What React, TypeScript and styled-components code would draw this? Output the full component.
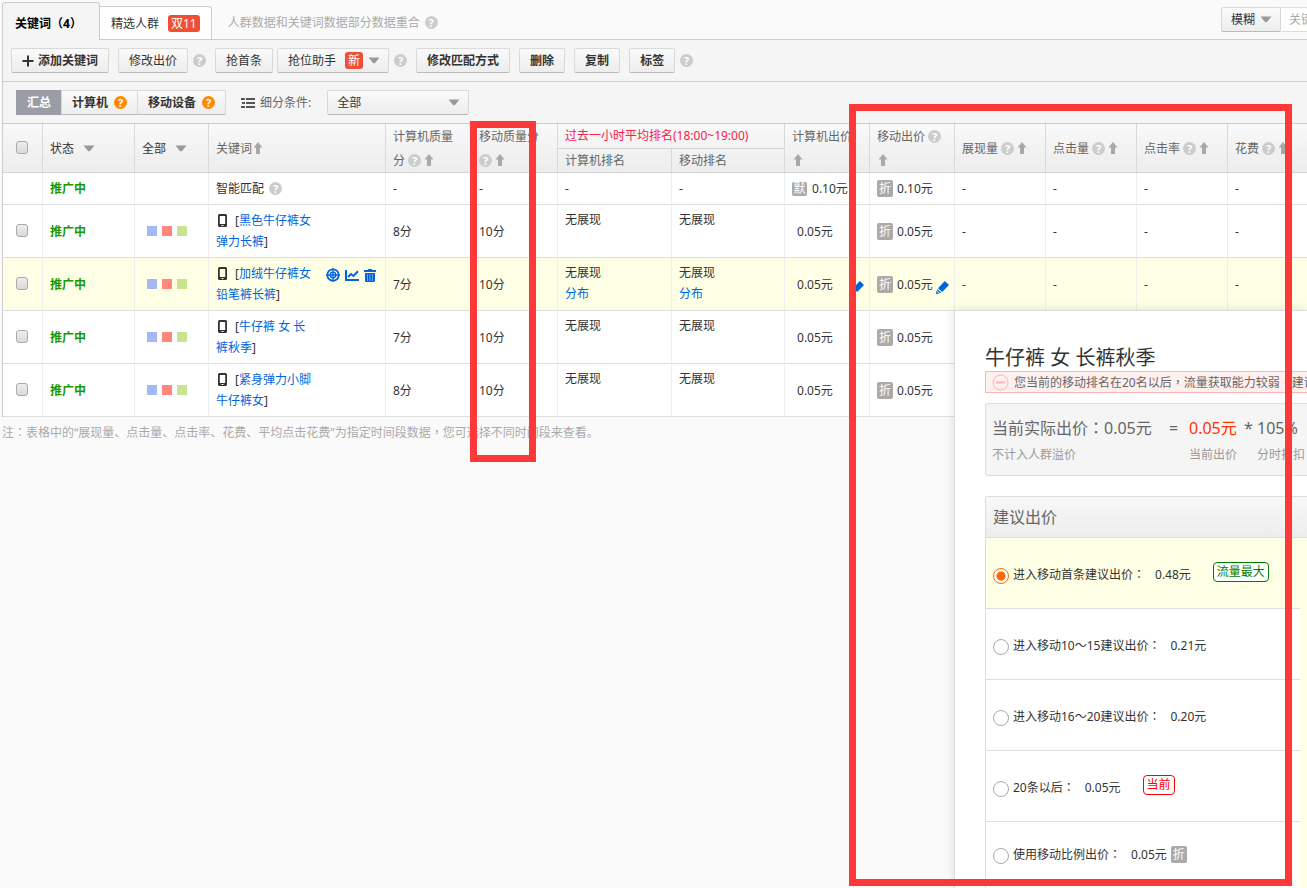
import React from "react";
import styled, { createGlobalStyle, css } from "styled-components";

const GlobalStyle = createGlobalStyle`
  *, *::before, *::after { box-sizing: border-box; }
  body {
    margin: 0;
    background: #fafafa;
    color: #333;
    font: 12px/21px "Noto Sans", "Noto Sans CJK SC", sans-serif;
  }
  button, input, select { font: inherit; color: inherit; margin: 0; }
  a { color: #0065dd; text-decoration: none; }
`;

/* Full-width colons, commas and brackets sit in the middle of their square. */
const Centred = styled.span`
  font-family: "Noto Sans CJK TC", sans-serif;
  line-height: 1;
`;

const centred = (text: string) =>
  text.split(/([：，（）])/).map((part, i) => (i % 2 ? <Centred key={i}>{part}</Centred> : part));

/* ---------- icons ---------- */

const Svg = styled.svg`
  display: block;
  flex: none;
`;

const HelpMark = styled.span<{ $tone?: string }>`
  display: inline-flex;
  flex: none;
  align-items: center;
  justify-content: center;
  width: 13px;
  height: 13px;
  border-radius: 50%;
  background: ${(p) => p.$tone || "#ccc"};
  color: #fff;
  font-size: 11px;
  font-weight: 700;
  line-height: 13px;
`;

const Help = ({ tone }: { tone?: string }) => <HelpMark $tone={tone}>?</HelpMark>;

const SortUp = () => (
  <Svg width="12" height="12" viewBox="0 0 12 12" fill="#a8a8a8">
    <path d="M6 0L10.500 5.500H8V12H4V5.500H1.500Z" />
  </Svg>
);

const Caret = ({ className }: { className?: string }) => (
  <Svg className={className} width="12" height="7" viewBox="0 0 12 7" fill="#999">
    <path d="M0.500 0.500H11.500L6.800 6.300H5.200Z" />
  </Svg>
);

const PlusIcon = () => (
  <Svg width="12" height="12" viewBox="0 0 12 12" fill="#333">
    <path d="M5 0.500H7V5H11.500V7H7V11.500H5V7H0.500V5H5Z" />
  </Svg>
);

const ListIcon = () => (
  <Svg width="14" height="12" viewBox="0 0 14 12" fill="#555">
    <path d="M0 1H4V3H0ZM5 1H14V3H5ZM1 5H4V7H1ZM5 5H14V7H5ZM0 9H4V11H0ZM5 9H14V11H5Z" />
  </Svg>
);

const PhoneIcon = styled(Svg)`
  display: inline-block;
  margin: 0 4px 0 2px;
  vertical-align: -2px;
`;

const Phone = () => (
  <PhoneIcon width="10" height="13" viewBox="0 0 10 13">
    <path
      fill="#333"
      fillRule="evenodd"
      d="M1.500 0H7.500Q9 0 9 1.500V11.500Q9 13 7.500 13H1.500Q0 13 0 11.500V1.500Q0 0 1.500 0ZM1.800 2V10H7.200V2ZM3.500 11V12H5.500V11Z"
    />
  </PhoneIcon>
);

const TargetIcon = () => (
  <Svg width="14" height="14" viewBox="0 0 14 14" fill="none" stroke="#0065dd">
    <circle cx="7" cy="7" r="5.700" strokeWidth="1.800" />
    <circle cx="7" cy="7" r="2.800" strokeWidth="1.300" />
    <path d="M7 0V14M0 7H14" strokeWidth="1.300" />
  </Svg>
);

const ChartIcon = () => (
  <Svg width="14" height="13" viewBox="0 0 14 13" fill="none" stroke="#0065dd" strokeWidth="2">
    <path d="M1 1V11H14" />
    <path d="M3 8L6 5L8.500 7L13 2.300" />
  </Svg>
);

const TrashIcon = () => (
  <Svg width="12" height="13" viewBox="0 0 12 13">
    <path fill="#0065dd" d="M4 0H8V1H12V3H0V1H4ZM1 4H11V12Q11 13 10 13H2Q1 13 1 12Z" />
    <path stroke="#fff" strokeOpacity="0.400" d="M3.500 5V12M6 5V12M8.500 5V12" />
  </Svg>
);

const PencilSvg = styled(Svg)`
  margin: 6px 0 0 auto;
`;

const Pencil = () => (
  <PencilSvg width="13" height="13" viewBox="0 0 13 13" fill="#0065dd">
    <path d="M8.800 0L13 4L6.200 11L2 7.200ZM1.400 8L5.300 11.700L4 12.300L1.300 10ZM0.200 9.800L3.200 12.700L0.200 13Z" />
  </PencilSvg>
);

const MinusCircle = () => (
  <Svg width="17" height="17" viewBox="0 0 17 17" fill="none" stroke="#ffb0b0">
    <circle cx="8.500" cy="8.500" r="7.500" />
    <path d="M4 8.500H13" strokeWidth="2" />
  </Svg>
);

/* ---------- page frame ---------- */

const Page = styled.div`
  position: relative;
  min-height: 100vh;
  padding-left: 2px;
  overflow: hidden;
`;

const TabBar = styled.header`
  display: flex;
  align-items: flex-end;
  height: 40px;
  border-bottom: 1px solid #ccc;
`;

const Tab = styled.button<{ $active?: boolean }>`
  display: flex;
  align-items: center;
  gap: 9px;
  flex: none;
  padding: 0 11px;
  height: 33px;
  border: 1px solid #ccc;
  border-left: 0;
  border-bottom: 0;
  border-radius: 0 4px 0 0;
  background: #fff;
  ${(p) =>
    p.$active &&
    css`
      gap: 0;
      height: 38px;
      padding: 3px 17px 0 12px;
      margin-bottom: -1px;
      border-left: 1px solid #ccc;
      border-radius: 4px 4px 0 0;
      background: #f5f5f5;
      color: #000;
      font-weight: 700;
    `}
`;

const RedBadge = styled.span`
  padding: 0 3px;
  border-radius: 3px;
  background: #ee4f35;
  color: #fff;
  line-height: 17px;
`;

const TabNote = styled.span`
  display: flex;
  align-items: center;
  align-self: center;
  gap: 5px;
  flex: none;
  margin: 6px 0 0 16px;
  color: #aaa;
`;

const SearchGroup = styled.div`
  display: flex;
  align-self: flex-end;
  margin: 0 0 7px auto;
`;

const SearchInput = styled.input`
  width: 26px;
  height: 25px;
  padding: 0 0 0 8px;
  border: 1px solid #ddd;
  border-width: 1px 0;
  background: #fff;
  outline: 0;
  &::placeholder { color: #aaa; opacity: 1; }
`;

const Panel = styled.main`
  border-left: 1px solid #ccc;
  background: #f5f5f5;
`;

const Toolbar = styled.div`
  display: flex;
  align-items: center;
  height: 42px;
  padding-left: 8px;
  border-bottom: 1px solid #ccc;
`;

const face = css`
  border: 1px solid #d9d9d9;
  border-bottom-color: #bbb;
  border-radius: 2px;
  background: linear-gradient(#fafafa, #ededed);
`;

const ToolButton = styled.button<{ $strong?: boolean }>`
  ${face}
  display: flex;
  align-items: center;
  flex: none;
  height: 25px;
  padding: 0 10px;
  margin-right: 9px;
  line-height: 21px;
  font-weight: ${(p) => (p.$strong ? 700 : 400)};
`;

const PlusGap = styled.span`
  margin-left: 4px;
`;

const ToolHelp = styled.span`
  display: flex;
  margin: 0 9px 0 -4px;
`;

const AssistButton = styled(ToolButton)`
  gap: 5px;
  padding-right: 8px;
  margin-left: -5px;
`;

const NewBadge = styled(RedBadge)`
  margin-left: 4px;
`;

const Segments = styled.div`
  display: flex;
  flex: none;
  margin-left: 5px;
`;

const Segment = styled.button<{ $active?: boolean }>`
  ${face}
  display: flex;
  align-items: center;
  gap: 6px;
  height: 25px;
  padding: 0 10px;
  margin-left: -1px;
  border-radius: 0;
  font-weight: 700;
  &:first-child { margin-left: 0; }
  ${(p) =>
    p.$active &&
    css`
      border-color: #9a9da6;
      background: #9a9da6;
      color: #fff;
    `}
`;

const FilterLabel = styled.label`
  display: flex;
  align-items: center;
  gap: 5px;
  margin: 0 16px 0 15px;
  color: #666;
`;

const SelectWrap = styled.span<{ $width: number }>`
  position: relative;
  flex: none;
  width: ${(p) => p.$width}px;
`;

const SelectBox = styled.select`
  ${face}
  appearance: none;
  display: block;
  width: 100%;
  height: 25px;
  padding: 0 9px;
`;

const SelectCaret = styled(Caret)`
  position: absolute;
  right: 9px;
  top: 9px;
  pointer-events: none;
`;

/* ---------- keyword table ---------- */

const Scroller = styled.div`
  overflow: hidden;
`;

const Table = styled.table`
  table-layout: fixed;
  width: 1317px;
  border-collapse: separate;
  border-spacing: 0;
  background: #fff;
`;

const Head = styled.thead`
  background: linear-gradient(#f9f9f9, #ececec);
`;

const Th = styled.th<{ $accent?: boolean }>`
  height: 24px;
  padding: 0 0 0 7px;
  border-right: 1px solid #d9d9d9;
  border-bottom: 1px solid #d4d4d4;
  color: ${(p) => (p.$accent ? "#f5204a" : "#666")};
  font-weight: 400;
  line-height: 23px;
  text-align: left;
  white-space: nowrap;
`;

const HeadLine = styled.span`
  display: flex;
  align-items: center;
  height: 24px;
`;

const HeadHelp = styled.span<{ $lead?: boolean }>`
  display: flex;
  margin: 0 2px 0 ${(p) => (p.$lead ? 0 : 3)}px;
`;

const HeadMenu = styled.button`
  display: flex;
  align-items: center;
  gap: 9px;
  width: 56px;
  padding: 0;
  border: 0;
  background: none;
  color: #333;
`;

const Row = styled.tr<{ $hover?: boolean }>`
  background: ${(p) => (p.$hover ? "#ffffe5" : "#fff")};
`;

const Td = styled.td<{ $top?: boolean; $short?: boolean }>`
  height: ${(p) => (p.$short ? 32 : 53)}px;
  padding: ${(p) => (p.$top ? "4px 5px 0 7px" : "0 5px 0 7px")};
  border-right: 1px solid #eee;
  border-bottom: 1px solid #ddd;
  vertical-align: ${(p) => (p.$top ? "top" : "middle")};
  white-space: nowrap;
`;

const Check = styled.input`
  appearance: none;
  display: block;
  width: 12px;
  height: 13px;
  margin: 0 0 2px 6px;
  border: 1px solid #aaa;
  border-radius: 3px;
  background: linear-gradient(#eee, #d9d9d9);
`;

const Status = styled.b`
  color: #1a9900;
`;

const Swatches = styled.div`
  display: flex;
  gap: 5px;
  padding-left: 5px;
`;

const Swatch = styled.span<{ $color: string }>`
  width: 10px;
  height: 10px;
  background: ${(p) => p.$color};
`;

const KeywordCell = styled.div`
  display: flex;
  align-items: flex-start;
  gap: 10px;
`;

const KeywordText = styled.div`
  width: 100px;
  white-space: normal;
`;

const Actions = styled.div`
  display: flex;
  align-items: center;
  gap: 5px;
  padding-top: 5px;
`;

const Inline = styled.span`
  display: flex;
  align-items: center;
  gap: 5px;
`;

const Bid = styled.div<{ $indent?: boolean }>`
  display: flex;
  align-items: center;
  padding-left: ${(p) => (p.$indent ? 5 : 0)}px;
`;

const GreyBadge = styled.span`
  flex: none;
  width: 16px;
  margin-right: 4px;
  border-radius: 2px;
  background: #aaa;
  color: #fff;
  line-height: 17px;
  text-align: center;
`;

const SmallBadge = styled(GreyBadge)`
  width: 15px;
  margin-right: 5px;
  line-height: 14px;
`;

const Stack = styled.div`
  display: flex;
  flex-direction: column;
  align-items: flex-start;
`;

const FootNote = styled.p`
  margin: 0;
  padding-top: 5px;
  color: #aaa;
`;

/* ---------- bid popover ---------- */

const Popover = styled.section`
  position: absolute;
  top: 310px;
  left: 954px;
  right: 0;
  bottom: 0;
  padding: 33px 0 0 30px;
  overflow: hidden;
  border: 1px solid #ddd;
  border-width: 1px 0 0 1px;
  background: #fff;
  box-shadow: 0 0 10px rgba(0, 0, 0, 0.12);
  white-space: nowrap;
`;

const Title = styled.h2`
  margin: 0;
  font-size: 20px;
  font-weight: 400;
  line-height: 27px;
`;

const Alert = styled.div`
  display: flex;
  align-items: center;
  gap: 5px;
  height: 22px;
  padding-left: 6px;
  border: 1px solid #ffb3b3;
  border-right: 0;
  background: #fff0f0;
  color: #666;
`;

const Formula = styled.div`
  display: grid;
  grid-template-columns: 177px 20px 55px 13px auto;
  grid-template-rows: 26px 26px;
  align-items: center;
  height: 73px;
  margin-top: 10px;
  padding: 11px 0 0 6px;
  border: 1px solid #ddd;
  border-right: 0;
  border-radius: 3px 0 0 3px;
  background: #f5f5f5;
  color: #666;
  font-size: 16px;
`;

const Price = styled.span`
  color: #ff3300;
`;

const Caption = styled.span<{ $column: number }>`
  grid-column: ${(p) => p.$column};
  color: #999;
  font-size: 12px;
`;

const Suggest = styled.fieldset`
  min-width: 0;
  margin: 20px 0 0;
  padding: 0;
  border: 1px solid #ddd;
  border-width: 1px 0 0 1px;
  border-radius: 3px 0 0 0;
  background: #ffffe5;
`;

const SuggestHead = styled.div`
  height: 41px;
  padding-left: 7px;
  border-bottom: 1px solid #ddd;
  background: linear-gradient(#f8f8f8, #ededed);
  color: #666;
  font-size: 16px;
  line-height: 40px;
`;

const Option = styled.label<{ $checked?: boolean }>`
  display: flex;
  align-items: center;
  height: 71px;
  margin-right: 7px;
  padding: 3px 0 0 7px;
  border-bottom: 1px solid #ddd;
  background: ${(p) => (p.$checked ? "#ffffe5" : "#fff")};
  &:last-child { padding-bottom: 8px; }
`;

const OptionLabel = styled.span``;

const Radio = styled.input`
  appearance: none;
  flex: none;
  width: 16px;
  height: 16px;
  margin: 2px 4px 0 0;
  border: 1px solid #aaa;
  border-radius: 50%;
  background: #fff;
  &:checked {
    border-color: #ff6600;
    background: radial-gradient(circle, #ff6600 4px, #fff 5px);
  }
`;

const OptionPrice = styled.span`
  margin: 0 4px 0 10px;
`;

const Tag = styled.span<{ $color: string }>`
  margin: 0 0 5px 18px;
  padding: 0 3px;
  border: 1px solid;
  border-radius: 4px;
  background: #fff;
  color: ${(p) => p.$color};
  line-height: 18px;
`;

/* Red rectangles drawn over the page to call out a region. */
const Callout = styled.div<{ $left: number; $top: number; $width: number; $height: number }>`
  position: absolute;
  left: ${(p) => p.$left}px;
  top: ${(p) => p.$top}px;
  width: ${(p) => p.$width}px;
  height: ${(p) => p.$height}px;
  border: 7px solid #fd3838;
  pointer-events: none;
`;

/* ---------- data ---------- */

const columns = [40, 92, 74, 177, 86, 86, 114, 113, 85, 85, 91, 91, 91, 92];

const keywords = [
  { text: "黑色牛仔裤女弹力长裤", pc: "8分" },
  { text: "加绒牛仔裤女铅笔裤长裤", pc: "7分", hover: true },
  { text: "牛仔裤 女 长裤秋季", pc: "7分" },
  { text: "紧身弹力小脚牛仔裤女", pc: "8分" },
];

const options = [
  { label: "进入移动首条建议出价：", price: "0.48元", tag: "流量最大", color: "#008000" },
  { label: "进入移动10～15建议出价：", price: "0.21元" },
  { label: "进入移动16～20建议出价：", price: "0.20元" },
  { label: "20条以后：", price: "0.05元", tag: "当前", color: "#ff0000" },
  { label: "使用移动比例出价：", price: "0.05元", discount: true },
];

const metrics = ["展现量", "点击量", "点击率", "花费"];

const Rank = ({ more }: { more?: boolean }) => (
  <Stack>
    <span>无展现</span>
    {more && <a href="#rank">分布</a>}
  </Stack>
);

export default function App() {
  return (
    <>
      <GlobalStyle />
      <Page>
        <TabBar>
          <Tab $active><span>{centred("关键词（4）")}</span></Tab>
          <Tab>
            精选人群<RedBadge>双11</RedBadge>
          </Tab>
          <TabNote>
            人群数据和关键词数据部分数据重合
            <Help />
          </TabNote>
          <SearchGroup>
            <SelectWrap $width={60}>
              <SelectBox aria-label="匹配">
                <option>模糊</option>
              </SelectBox>
              <SelectCaret />
            </SelectWrap>
            <SearchInput aria-label="关键词" placeholder="关键词" />
          </SearchGroup>
        </TabBar>

        <Panel>
          <Toolbar>
            <ToolButton $strong>
              <PlusIcon />
              <PlusGap>添加关键词</PlusGap>
            </ToolButton>
            <ToolButton>修改出价</ToolButton>
            <ToolHelp><Help /></ToolHelp>
            <ToolButton>抢首条</ToolButton>
            <AssistButton>
              抢位助手
              <NewBadge>新</NewBadge>
              <Caret />
            </AssistButton>
            <ToolHelp><Help /></ToolHelp>
            <ToolButton $strong>修改匹配方式</ToolButton>
            <ToolButton $strong>删除</ToolButton>
            <ToolButton $strong>复制</ToolButton>
            <ToolButton $strong>标签</ToolButton>
            <ToolHelp><Help /></ToolHelp>
          </Toolbar>
          <Toolbar>
            <Segments>
              <Segment $active>汇总</Segment>
              <Segment>计算机<Help tone="#ff8800" /></Segment>
              <Segment>移动设备<Help tone="#ff8800" /></Segment>
            </Segments>
            <FilterLabel htmlFor="condition">
              <ListIcon />
              细分条件:
            </FilterLabel>
            <SelectWrap $width={142}>
              <SelectBox id="condition">
                <option>全部</option>
              </SelectBox>
              <SelectCaret />
            </SelectWrap>
          </Toolbar>

          <Scroller>
            <Table>
              <colgroup>
                {columns.map((w, i) => (
                  <col key={i} width={w} />
                ))}
              </colgroup>
              <Head>
                <tr>
                  <Th rowSpan={2}><Check type="checkbox" aria-label="全选" /></Th>
                  <Th rowSpan={2}><HeadMenu>状态<Caret /></HeadMenu></Th>
                  <Th rowSpan={2}><HeadMenu>全部<Caret /></HeadMenu></Th>
                  <Th rowSpan={2}><HeadLine>关键词<SortUp /></HeadLine></Th>
                  <Th rowSpan={2}>
                    <HeadLine>计算机质量</HeadLine>
                    <HeadLine>分<HeadHelp><Help /></HeadHelp><SortUp /></HeadLine>
                  </Th>
                  <Th rowSpan={2}>
                    <HeadLine>移动质量分</HeadLine>
                    <HeadLine><HeadHelp $lead><Help /></HeadHelp><SortUp /></HeadLine>
                  </Th>
                  <Th colSpan={2} $accent>过去一小时平均排名(18:00~19:00)</Th>
                  <Th rowSpan={2}>
                    <HeadLine>计算机出价</HeadLine>
                    <HeadLine><SortUp /></HeadLine>
                  </Th>
                  <Th rowSpan={2}>
                    <HeadLine>移动出价<HeadHelp><Help /></HeadHelp></HeadLine>
                    <HeadLine><SortUp /></HeadLine>
                  </Th>
                  {metrics.map((m) => (
                    <Th key={m} rowSpan={2}>
                      <HeadLine>{m}<HeadHelp><Help /></HeadHelp><SortUp /></HeadLine>
                    </Th>
                  ))}
                </tr>
                <tr>
                  <Th>计算机排名</Th>
                  <Th>移动排名</Th>
                </tr>
              </Head>
              <tbody>
                <Row>
                  <Td $short />
                  <Td $short><Status>推广中</Status></Td>
                  <Td $short />
                  <Td $short><Inline>智能匹配<Help /></Inline></Td>
                  <Td $short>-</Td>
                  <Td $short>-</Td>
                  <Td $short>-</Td>
                  <Td $short>-</Td>
                  <Td $short><Bid><SmallBadge>默</SmallBadge>0.10元</Bid></Td>
                  <Td $short><Bid><GreyBadge>折</GreyBadge>0.10元</Bid></Td>
                  {metrics.map((m) => <Td key={m} $short>-</Td>)}
                </Row>
                {keywords.map((k) => (
                  <Row key={k.text} $hover={k.hover}>
                    <Td><Check type="checkbox" aria-label={k.text} /></Td>
                    <Td><Status>推广中</Status></Td>
                    <Td>
                      <Swatches>
                        <Swatch $color="#a4b9f2" />
                        <Swatch $color="#ff877b" />
                        <Swatch $color="#c8e48e" />
                      </Swatches>
                    </Td>
                    <Td>
                      <KeywordCell>
                        <KeywordText>
                          <Phone /> [<a href="#keyword">{k.text}</a>]
                        </KeywordText>
                        {k.hover && (
                          <Actions>
                            <TargetIcon />
                            <ChartIcon />
                            <TrashIcon />
                          </Actions>
                        )}
                      </KeywordCell>
                    </Td>
                    <Td>{k.pc}</Td>
                    <Td>10分</Td>
                    <Td $top><Rank more={k.hover} /></Td>
                    <Td $top><Rank more={k.hover} /></Td>
                    <Td><Bid $indent>0.05元{k.hover && <Pencil />}</Bid></Td>
                    <Td><Bid><GreyBadge>折</GreyBadge>0.05元{k.hover && <Pencil />}</Bid></Td>
                    {metrics.map((m) => <Td key={m}>-</Td>)}
                  </Row>
                ))}
              </tbody>
            </Table>
          </Scroller>
        </Panel>
        <FootNote>
          {centred("注：表格中的“展现量、点击量、点击率、花费、平均点击花费”为指定时间段数据，您可选择不同时间段来查看。")}
        </FootNote>

        <Popover>
          <Title>牛仔裤 女 长裤秋季</Title>
          <Alert>
            <MinusCircle />
            <span>{centred("您当前的移动排名在20名以后，流量获取能力较弱，建议")}</span>
          </Alert>
          <Formula>
            <span>{centred("当前实际出价：0.05元")}</span>
            <span>=</span>
            <Price>0.05元</Price>
            <span>*</span>
            <span>105%</span>
            <Caption $column={1}>不计入人群溢价</Caption>
            <Caption $column={3}>当前出价</Caption>
            <Caption $column={5}>分时折扣</Caption>
          </Formula>
          <Suggest>
            <SuggestHead>建议出价</SuggestHead>
            {options.map((o, i) => (
              <Option key={o.label} $checked={i === 0}>
                <Radio type="radio" name="bid" defaultChecked={i === 0} />
                <OptionLabel>{centred(o.label)}</OptionLabel>
                <OptionPrice>{o.price}</OptionPrice>
                {o.tag && <Tag $color={o.color || "#333"}>{o.tag}</Tag>}
                {o.discount && <GreyBadge>折</GreyBadge>}
              </Option>
            ))}
          </Suggest>
        </Popover>

        <Callout $left={470} $top={121} $width={66} $height={341} />
        <Callout $left={849} $top={104} $width={443} $height={782} />
      </Page>
    </>
  );
}
